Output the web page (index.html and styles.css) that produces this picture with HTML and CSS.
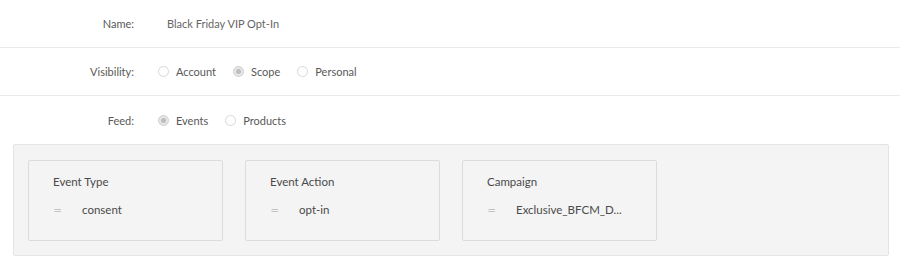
FILE: index.html
```html
<!DOCTYPE html>
<html>
<head>
<meta charset="utf-8">
<link rel="stylesheet" href="styles.css">
</head>
<body>
<div class="form">
  <div class="row">
    <div class="label">Name:</div>
    <div class="value name-value">Black Friday VIP Opt-In</div>
  </div>
  <div class="row">
    <div class="label">Visibility:</div>
    <div class="value radios">
      <label class="radio"><span class="dot"></span>Account</label>
      <label class="radio"><span class="dot checked"></span>Scope</label>
      <label class="radio"><span class="dot"></span>Personal</label>
    </div>
  </div>
  <div class="row last">
    <div class="label">Feed:</div>
    <div class="value radios">
      <label class="radio"><span class="dot checked"></span>Events</label>
      <label class="radio"><span class="dot"></span>Products</label>
    </div>
  </div>
  <div class="panel">
    <div class="card">
      <div class="card-title">Event Type</div>
      <div class="cond"><span class="op">=</span><span class="cval">consent</span></div>
    </div>
    <div class="card">
      <div class="card-title">Event Action</div>
      <div class="cond"><span class="op">=</span><span class="cval">opt-in</span></div>
    </div>
    <div class="card">
      <div class="card-title">Campaign</div>
      <div class="cond"><span class="op">=</span><span class="cval">Exclusive_BFCM_D...</span></div>
    </div>
  </div>
</div>
</body>
</html>
```
FILE: styles.css
```css
html, body {
  margin: 0;
  padding: 0;
  background: #fff;
}
body {
  font-family: Lato, "Open Sans", sans-serif;
  font-size: 11px;
  color: #555;
}
.row {
  display: flex;
  align-items: center;
  height: 47px;
  border-bottom: 1px solid #ebebeb;
}
.row.last {
  border-bottom: none;
  height: 48px;
}
.label {
  width: 134px;
  text-align: right;
  color: #585858;
  font-size: 11px;
}
.value {
  margin-left: 24px;
}
.name-value {
  padding-left: 9px;
  color: #666;
  font-size: 11px;
  margin-top: -1px;
}
.radios {
  display: flex;
  align-items: center;
  font-size: 11px;
}
.radio {
  display: flex;
  align-items: center;
  margin-right: 17px;
  color: #585858;
}
.dot {
  width: 9px;
  height: 9px;
  border: 1px solid #d8d8d8;
  border-radius: 50%;
  margin-right: 7px;
  background: #fff;
  box-sizing: content-box;
  position: relative;
}
.dot.checked {
  background: #e6e6e6;
  border-color: #d0d0d0;
}
.dot.checked::after {
  content: "";
  position: absolute;
  left: 2px;
  top: 2px;
  width: 5px;
  height: 5px;
  border-radius: 50%;
  background: #bdbdbd;
}
.panel {
  margin: 0 11px 0 13px;
  background: #f4f4f4;
  border: 1px solid #e4e4e4;
  border-radius: 2px;
  padding: 15px 15px 14px 14px;
  display: flex;
  gap: 22px;
}
.card {
  border: 1px solid #dcdcdc;
  border-radius: 2px;
  background: #f4f4f4;
  padding: 0 0 0 24px;
  box-sizing: border-box;
  width: 195px;
  height: 81px;
}
.card-title {
  margin-top: 13px;
  color: #4a4a4a;
  font-size: 11.5px;
  line-height: 16px;
}
.cond {
  margin-top: 12px;
  display: flex;
  align-items: center;
  color: #4a4a4a;
  font-size: 11.5px;
  line-height: 16px;
}
.op {
  width: 29px;
  color: #a0a0a0;
  font-size: 16px;
  font-weight: 300;
}
```
